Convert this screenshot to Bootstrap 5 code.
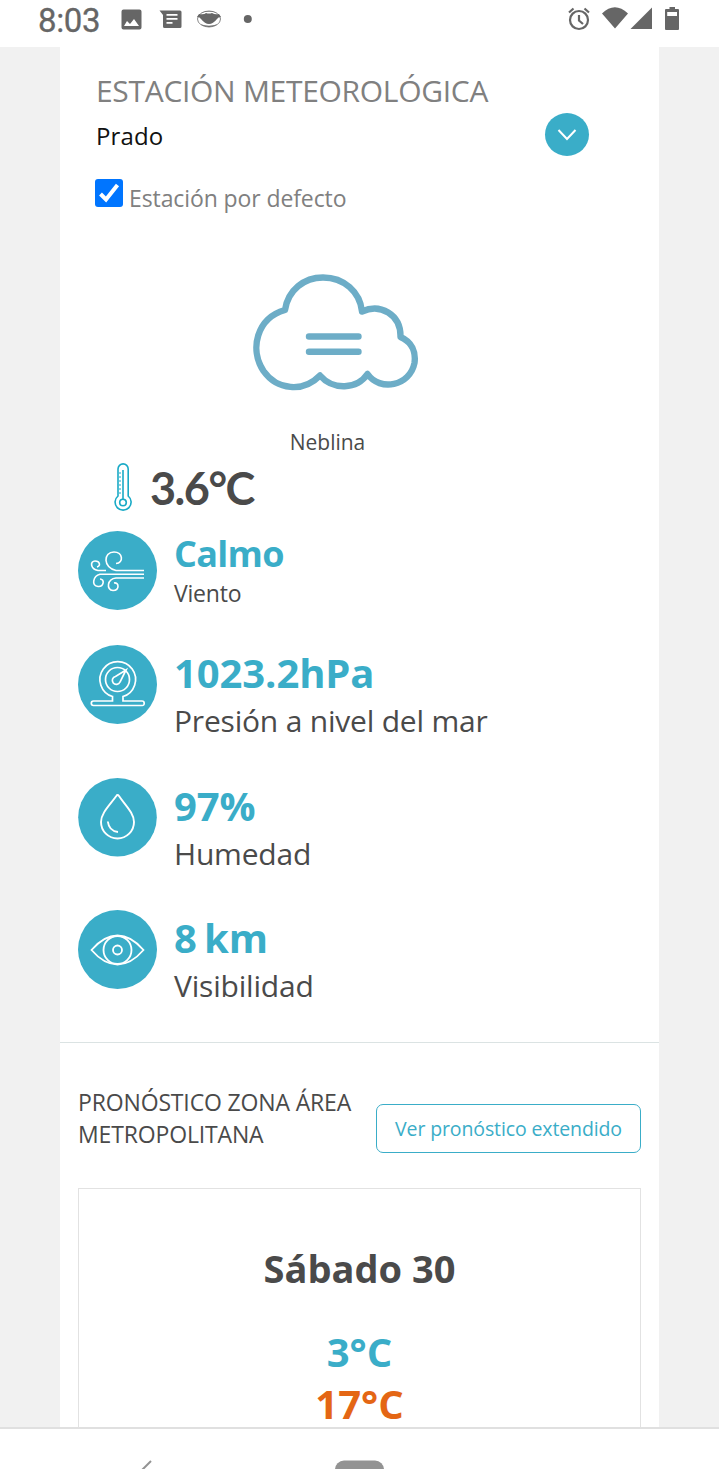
<!DOCTYPE html>
<html lang="es">
<head>
<meta charset="utf-8">
<meta name="viewport" content="width=device-width, initial-scale=1">
<title>Estación Meteorológica</title>
<link rel="stylesheet" href="https://cdn.jsdelivr.net/npm/bootstrap@5.3.0/dist/css/bootstrap.min.css">
<style>
:root{--teal:#3aadc8;--ink:#4a4a4a}
body{font-family:"Open Sans",sans-serif;color:var(--ink);background:#f1f1f1;height:1469px}
svg{display:block;flex:none}
.status-bar{height:47px;padding-left:38px;color:#666}
.clock{font:400 33px/41px Roboto,sans-serif;letter-spacing:-.4px;width:82px;-webkit-text-stroke:.3px #666}
.page{width:599px;height:1380px}
.station{padding:24px 36px 0 36px;height:165px}
.station-title{font-size:30px;line-height:40px;color:#808080;letter-spacing:-.3px}
.station-pick{height:47px;padding-right:34px}
.station-name{font-size:24px;line-height:40px;color:#111;padding-top:3px;letter-spacing:.1px}
.round-btn{width:44px;height:43px;background:var(--teal)}
.tick{width:28px;height:28px;background:#0075ff;border-radius:3px;margin-left:-1px}
.default-row{margin-top:21px;font-size:23px;line-height:30px;color:#808080;letter-spacing:-.1px}
.default-row label{margin:4px 0 0 6px}
.sky{height:249px;padding-top:60px}
.sky svg{margin-left:189px}
.sky-name{font-size:21px;line-height:30px;margin-top:33px;width:535px}
.temp{height:70px;padding-left:53px}
.temp-value{font:700 45px/55px Lato,sans-serif;letter-spacing:-1.5px;margin-left:17px}
.measure{padding-left:18px;height:133px}
.measure .value{font-size:40px;line-height:54px;color:var(--teal);letter-spacing:-.1px;padding-top:1px}
.measure .name{font-size:30px;line-height:40px;padding-top:1px;letter-spacing:-.2px}
.measure svg{width:79px;height:79px;margin-right:17px}
.measure.wind .value{font-size:36px;line-height:50px;margin:-2px 0 -1px;letter-spacing:-.7px;padding:0}
.measure.wind .name{font-size:23px;line-height:30px;padding:0}
.measure .distance{word-spacing:-3px}
.measure.wind{height:114px}
.measure.brief{height:132px}
.forecast{border-top:1px solid #dbe3e3;padding:43px 18px 0;height:385px}
.zone{font-size:23px;line-height:32px;letter-spacing:-.15px}
.btn-more{width:265px;height:49px;border:1px solid var(--teal);border-radius:7px;color:var(--teal);font-size:19.5px;letter-spacing:-.12px;line-height:27px;padding:10px 0;margin-top:18px;white-space:nowrap}
.day{margin-top:35px;height:239px;border:1px solid #e2e2e2;border-bottom:0;padding-top:53px}
.day-name{font-size:38px;line-height:52px}
.day-t{font-size:40px;line-height:52px}
.min{color:var(--teal);margin-top:32px}
.day-t.max{color:#e46614;line-height:42px;margin-top:5px}
.system-nav{height:42px;border-top:2px solid #e0e0e0;padding-left:136px}
</style>
</head>
<body class="overflow-hidden">
<header class="status-bar bg-white d-flex">
  <div class="clock">8:03</div>
  <svg width="140" height="47" viewBox="120 0 140 47" fill="#666">
    <path fill-rule="evenodd" d="M123.500 9.500h16a2 2 0 0 1 2 2v16a2 2 0 0 1-2 2h-16a2 2 0 0 1-2-2v-16a2 2 0 0 1 2-2ZM124 26h15l-5-7-4 5-3-3Z"/>
    <path fill-rule="evenodd" d="M159.500 10.500H180a1.500 1.500 0 0 1 1.500 1.500v14.500a1.500 1.500 0 0 1-1.500 1.500h-15.500a1.500 1.500 0 0 1-1.500-1.500V15Zm7 3.500v1.700h11V14Zm0 4v1.700h11V18Zm0 4v1.700h6V22Z"/>
    <ellipse cx="209" cy="19" rx="11.500" ry="8" fill="none" stroke="#888" stroke-width="1"/>
    <path d="M199 14q5 1 7-1 3 1 6 0 3 2 7 1l2 3q-3 0-4 2-4 5-8 5t-8-5q-1-2-4-2Z"/>
    <path d="M201 13q8-4 16 0-4-1.500-8-1.500t-8 1.500ZM200 24q9 3.500 18 0-9 6-18 0Z"/>
    <circle cx="247.800" cy="19" r="4"/>
  </svg>
  <svg class="ms-auto me-4" width="130" height="47" viewBox="565 0 130 47" fill="#666">
    <circle cx="579" cy="20" r="9" fill="none" stroke="#666" stroke-width="2.200"/>
    <path d="M579 15v5.500l4 3.500M569 12.500l4.500-4M589 12.500l-4.500-4" fill="none" stroke="#666" stroke-width="2.200"/>
    <path d="M602 13.500q12.800-12.500 26 0L615 28.500ZM630.500 29L652 7.500V29Z"/>
    <path fill-rule="evenodd" d="M669.500 9V7h5.500v2h3a1 1 0 0 1 1 1v19a1 1 0 0 1-1 1h-12a1 1 0 0 1-1-1V10a1 1 0 0 1 1-1Zm-2.300 3v4h9.800v-4Z"/>
  </svg>
</header>
<main class="page bg-white mx-auto overflow-hidden">
  <section class="station">
    <div class="station-title">ESTACIÓN METEOROLÓGICA</div>
    <div class="station-pick d-flex align-items-center justify-content-between">
      <div class="station-name">Prado</div>
      <div class="round-btn rounded-circle"><svg viewBox="0 0 44 44" fill="none" stroke="#fff" stroke-width="2"><path d="M13.500 17l8.500 9 8.500-9"/></svg></div>
    </div>
    <div class="default-row d-flex align-items-start">
      <span class="tick"><svg width="28" height="28" fill="none" stroke="#fff" stroke-width="4"><path d="M5.500 15l5.500 5.500L22.500 6"/></svg></span>
      <label>Estación por defecto</label>
    </div>
  </section>
  <section class="sky">
    <svg width="172" height="122" viewBox="249 272 172 122" fill="none" stroke="#6dadc7" stroke-width="6.400" stroke-linejoin="round" stroke-linecap="round">
      <path d="M285 310C288 290 304 277.500 323 277.500C344 277.500 360 292 362 311.500C380 303 401 314 400.500 337C412 342 416 352 414.500 363C410 386 380 392 367.500 374C357 389.500 333 390.500 320 375.500C303 393 277 390 263.500 371C249 349 257 318 285 310Z"/>
      <path d="M309 336.500h49.500M309 351.800h49.500"/>
    </svg>
    <div class="sky-name text-center">Neblina</div>
  </section>
  <div class="temp d-flex align-items-start">
    <svg width="20" height="52" viewBox="113 461 20 52" fill="none" stroke="#19aac6" stroke-width="1.600">
      <path d="M118 496V469a5 5 0 0 1 10.200 0v27a8 8 0 1 1-10.200 0Z"/><path d="M123 470v29"/><circle cx="123" cy="502.500" r="3.300"/><path d="M119 473h2M119 477h2M119 481h2M119 485h2M119 489h2M119 493h2" stroke-width="1.200"/>
    </svg>
    <div class="temp-value">3.6°C</div>
  </div>
  <div class="measure wind d-flex">
    <svg viewBox="0 0 79 79" fill="none" stroke="#fff" stroke-width="1.600"><circle cx="39.500" cy="39.500" r="39.500" fill="#3aadc8" stroke="none"/>
      <path d="M66 39.500H38C25 37 25 21 36 21C45 21 46 32 38 32.500M28 39.500H20C12 38 12 30 17 30C22 30 23 35 19 36M66 43.200H22C15 45 13 55 20 55.500C26 56 27 48 22 48M66 47H38C29 48 28 59 35 59.500C42 59 41 51 36 52"/>
    </svg>
    <div><div class="value fw-bold">Calmo</div><div class="name">Viento</div></div>
  </div>
  <div class="measure d-flex">
    <svg viewBox="0 0 79 79" fill="none" stroke="#fff" stroke-width="1.700"><circle cx="39.500" cy="39.500" r="39.500" fill="#3aadc8" stroke="none"/>
      <path d="M34.500 51.500a17.800 17.800 0 1 1 10.500 0V56H64q2.200 0 2.200 2.300T64 60.500H15.500q-2.200 0-2.200-2.200T15.500 56h19Z"/>
      <circle cx="39.500" cy="34.500" r="12"/><path d="M48 25L37.500 31.500A4 4 0 1 0 42 37Z"/>
    </svg>
    <div><div class="value fw-bold">1023.2hPa</div><div class="name">Presión a nivel del mar</div></div>
  </div>
  <div class="measure brief d-flex">
    <svg viewBox="0 0 79 79" fill="none" stroke="#fff" stroke-width="1.900"><circle cx="39.500" cy="39.300" r="39.300" fill="#3aadc8" stroke="none"/>
      <path d="M38.300 18Q39.500 16 41 18C47 27 56 35 56 44a16.500 16.500 0 0 1-33 0C23 35 32 27 38.300 18ZM29.800 43.500Q31 53 40 54"/>
    </svg>
    <div><div class="value fw-bold">97%</div><div class="name">Humedad</div></div>
  </div>
  <div class="measure brief d-flex">
    <svg viewBox="0 0 79 79" fill="none" stroke="#fff" stroke-width="1.800"><circle cx="39.500" cy="39.500" r="39.500" fill="#3aadc8" stroke="none"/>
      <path d="M13.500 40Q26 25.500 39.500 25.500T65.500 40Q53 54.500 39.500 54.500T13.500 40Z"/><circle cx="39.500" cy="40" r="14"/><circle cx="39.500" cy="40" r="4.500"/>
    </svg>
    <div><div class="value distance fw-bold">8 km</div><div class="name">Visibilidad</div></div>
  </div>
  <section class="forecast">
    <div class="d-flex justify-content-between align-items-start">
      <div class="zone">PRONÓSTICO ZONA ÁREA<br>METROPOLITANA</div>
      <a class="btn btn-more">Ver pronóstico extendido</a>
    </div>
    <div class="day text-center fw-bold">
      <div class="day-name">Sábado 30</div>
      <div class="day-t min">3°C</div>
      <div class="day-t max">17°C</div>
    </div>
  </section>
</main>
<footer class="system-nav bg-white">
  <svg width="260" height="40" viewBox="136 1429 260 40"><path d="M151 1461l-15 15" stroke="#939393" stroke-width="2" fill="none"/><rect x="335" y="1460.500" width="49" height="26" rx="9" fill="#939393"/></svg>
</footer>
<script src="https://cdn.jsdelivr.net/npm/bootstrap@5.3.0/dist/js/bootstrap.bundle.min.js"></script>
</body>
</html>
